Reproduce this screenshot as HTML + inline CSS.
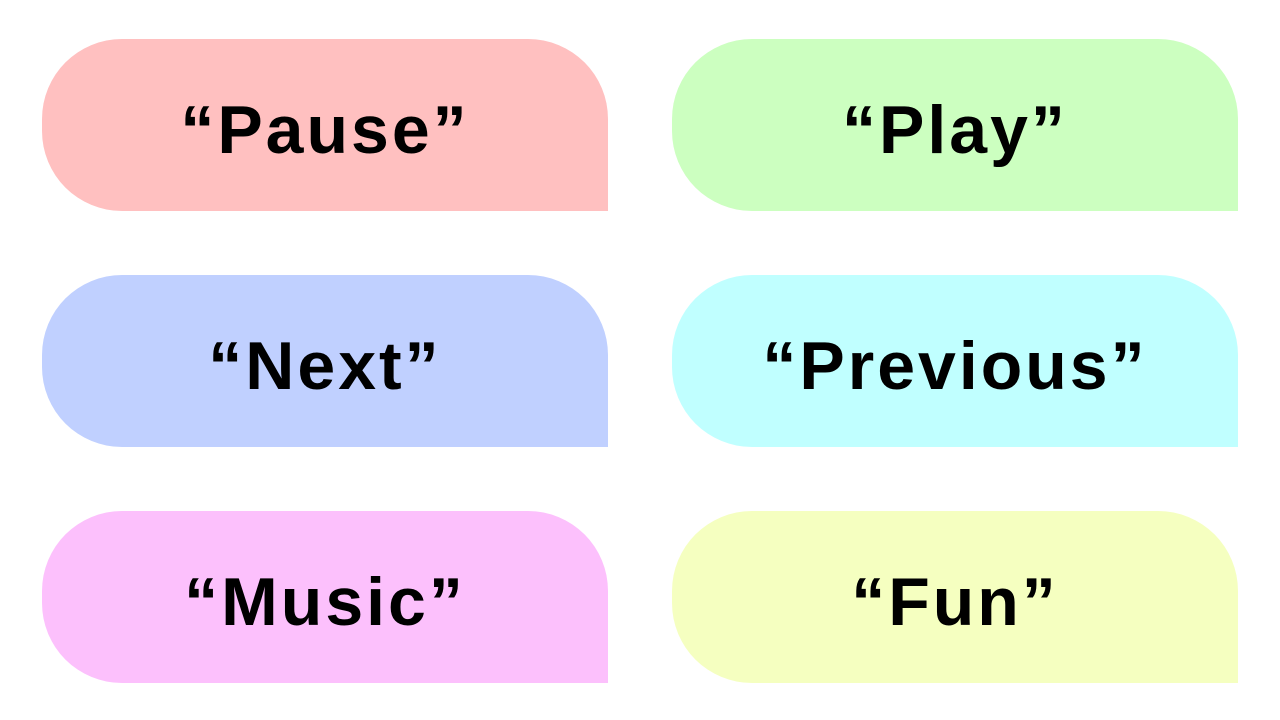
<!DOCTYPE html>
<html><head><meta charset="utf-8"><style>
html,body{margin:0;padding:0;background:#fff;width:1280px;height:720px;overflow:hidden;position:relative}
.b{position:absolute;width:566px;height:172px;box-sizing:border-box;padding-top:10px;border-radius:80px 80px 0 80px;display:flex;align-items:center;justify-content:center;font-family:"Liberation Sans",sans-serif;font-weight:bold;font-size:68px;letter-spacing:3px;color:#000}
</style></head><body>
<div class="b" style="left:42px;top:39px;background:#ffc0c0">“Pause”</div>
<div class="b" style="left:672px;top:39px;background:#ccffc0">“Play”</div>
<div class="b" style="left:42px;top:275px;background:#c0d0ff">“Next”</div>
<div class="b" style="left:672px;top:275px;background:#c0ffff">“Previous”</div>
<div class="b" style="left:42px;top:511px;background:#fcc0fc">“Music”</div>
<div class="b" style="left:672px;top:511px;background:#f5ffc0">“Fun”</div>
</body></html>
